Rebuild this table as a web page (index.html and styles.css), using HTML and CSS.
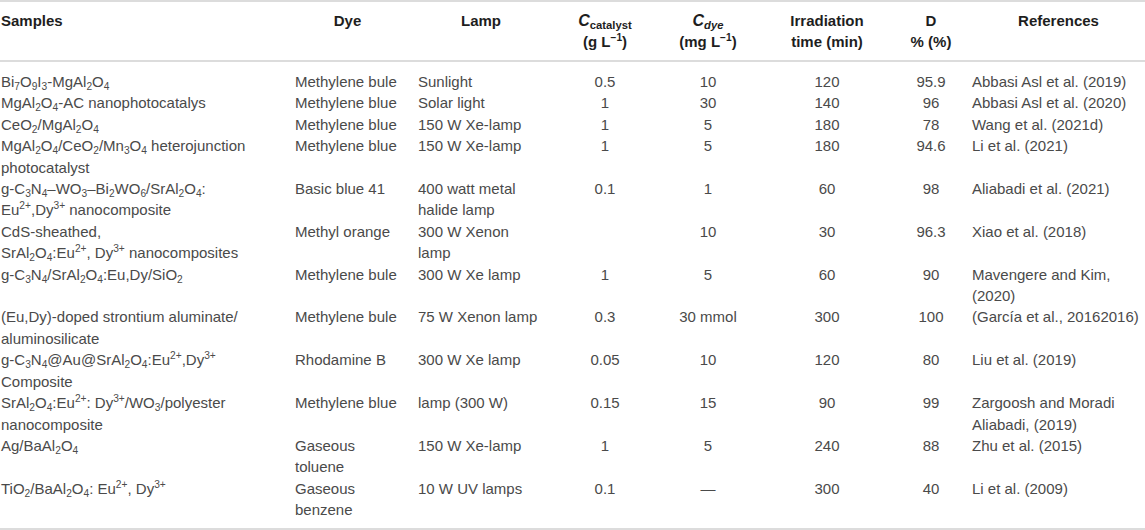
FILE: index.html
```html
<!DOCTYPE html>
<html lang="en">
<head>
  <meta charset="UTF-8" />
  <meta name="viewport" content="width=device-width, initial-scale=1.0"/>
  <link rel="stylesheet" href="styles.css">
</head>
<body>

  <!-- Photocatalysts table -->
  <table class="data-table">
    <colgroup>
      <col class="col-sample">
      <col class="col-dye">
      <col class="col-lamp">
      <col class="col-ccat">
      <col class="col-cdye">
      <col class="col-time">
      <col class="col-d">
      <col class="col-ref">
    </colgroup>
    <thead>
      <tr>
        <th class="left first">Samples</th>
        <th class="dye-head">Dye</th>
        <th>Lamp</th>
        <th><i class="big-c">C</i><sub>catalyst</sub><br>(g L<sup>−1</sup>)</th>
        <th><i class="big-c">C</i><sub><i>dye</i></sub><br>(mg L<sup>−1</sup>)</th>
        <th>Irradiation<br>time (min)</th>
        <th>D<br>% (%)</th>
        <th class="ref-head">References</th>
      </tr>
    </thead>
    <tbody>
      <tr>
        <td class="first">Bi<sub>7</sub>O<sub>9</sub>I<sub>3</sub>-MgAl<sub>2</sub>O<sub>4</sub></td>
        <td>Methylene bule</td>
        <td>Sunlight</td>
        <td class="num">0.5</td>
        <td class="num">10</td>
        <td class="num">120</td>
        <td class="num">95.9</td>
        <td class="ref">Abbasi Asl et al. (2019)</td>
      </tr>
      <tr>
        <td class="first">MgAl<sub>2</sub>O<sub>4</sub>-AC nanophotocatalys</td>
        <td>Methylene blue</td>
        <td>Solar light</td>
        <td class="num">1</td>
        <td class="num">30</td>
        <td class="num">140</td>
        <td class="num">96</td>
        <td class="ref">Abbasi Asl et al. (2020)</td>
      </tr>
      <tr>
        <td class="first">CeO<sub>2</sub>/MgAl<sub>2</sub>O<sub>4</sub></td>
        <td>Methylene blue</td>
        <td>150 W Xe-lamp</td>
        <td class="num">1</td>
        <td class="num">5</td>
        <td class="num">180</td>
        <td class="num">78</td>
        <td class="ref">Wang et al. (2021d)</td>
      </tr>
      <tr>
        <td class="first">MgAl<sub>2</sub>O<sub>4</sub>/CeO<sub>2</sub>/Mn<sub>3</sub>O<sub>4</sub> heterojunction<br>photocatalyst</td>
        <td>Methylene blue</td>
        <td>150 W Xe-lamp</td>
        <td class="num">1</td>
        <td class="num">5</td>
        <td class="num">180</td>
        <td class="num">94.6</td>
        <td class="ref">Li et al. (2021)</td>
      </tr>
      <tr>
        <td class="first">g-C<sub>3</sub>N<sub>4</sub>–WO<sub>3</sub>–Bi<sub>2</sub>WO<sub>6</sub>/SrAl<sub>2</sub>O<sub>4</sub>:<br>Eu<sup>2+</sup>,Dy<sup>3+</sup> nanocomposite</td>
        <td>Basic blue 41</td>
        <td>400 watt metal<br>halide lamp</td>
        <td class="num">0.1</td>
        <td class="num">1</td>
        <td class="num">60</td>
        <td class="num">98</td>
        <td class="ref">Aliabadi et al. (2021)</td>
      </tr>
      <tr>
        <td class="first">CdS-sheathed,<br>SrAl<sub>2</sub>O<sub>4</sub>:Eu<sup>2+</sup>, Dy<sup>3+</sup> nanocomposites</td>
        <td>Methyl orange</td>
        <td>300 W Xenon<br>lamp</td>
        <td class="num"></td>
        <td class="num">10</td>
        <td class="num">30</td>
        <td class="num">96.3</td>
        <td class="ref">Xiao et al. (2018)</td>
      </tr>
      <tr>
        <td class="first">g-C<sub>3</sub>N<sub>4</sub>/SrAl<sub>2</sub>O<sub>4</sub>:Eu,Dy/SiO<sub>2</sub></td>
        <td>Methylene bule</td>
        <td>300 W Xe lamp</td>
        <td class="num">1</td>
        <td class="num">5</td>
        <td class="num">60</td>
        <td class="num">90</td>
        <td class="ref">Mavengere and Kim,<br>(2020)</td>
      </tr>
      <tr>
        <td class="first">(Eu,Dy)-doped strontium aluminate/<br>aluminosilicate</td>
        <td>Methylene bule</td>
        <td>75 W Xenon lamp</td>
        <td class="num">0.3</td>
        <td class="num">30 mmol</td>
        <td class="num">300</td>
        <td class="num">100</td>
        <td class="ref">(García et al., 20162016)</td>
      </tr>
      <tr>
        <td class="first">g-C<sub>3</sub>N<sub>4</sub>@Au@SrAl<sub>2</sub>O<sub>4</sub>:Eu<sup>2+</sup>,Dy<sup>3+</sup><br>Composite</td>
        <td>Rhodamine B</td>
        <td>300 W Xe lamp</td>
        <td class="num">0.05</td>
        <td class="num">10</td>
        <td class="num">120</td>
        <td class="num">80</td>
        <td class="ref">Liu et al. (2019)</td>
      </tr>
      <tr>
        <td class="first">SrAl<sub>2</sub>O<sub>4</sub>:Eu<sup>2+</sup>: Dy<sup>3+</sup>/WO<sub>3</sub>/polyester<br>nanocomposite</td>
        <td>Methylene blue</td>
        <td>lamp (300 W)</td>
        <td class="num">0.15</td>
        <td class="num">15</td>
        <td class="num">90</td>
        <td class="num">99</td>
        <td class="ref">Zargoosh and Moradi<br>Aliabadi, (2019)</td>
      </tr>
      <tr>
        <td class="first">Ag/BaAl<sub>2</sub>O<sub>4</sub></td>
        <td>Gaseous<br>toluene</td>
        <td>150 W Xe-lamp</td>
        <td class="num">1</td>
        <td class="num">5</td>
        <td class="num">240</td>
        <td class="num">88</td>
        <td class="ref">Zhu et al. (2015)</td>
      </tr>
      <tr>
        <td class="first">TiO<sub>2</sub>/BaAl<sub>2</sub>O<sub>4</sub>: Eu<sup>2+</sup>, Dy<sup>3+</sup></td>
        <td>Gaseous<br>benzene</td>
        <td>10 W UV lamps</td>
        <td class="num">0.1</td>
        <td class="num">—</td>
        <td class="num">300</td>
        <td class="num">40</td>
        <td class="ref">Li et al. (2009)</td>
      </tr>
    </tbody>
  </table>

</body>
</html>
```

FILE: styles.css
```css
* {
  margin: 0;
  padding: 0;
  box-sizing: border-box;
}

html, body {
  background: #fff;
  font-family: 'Liberation Sans', Arial, sans-serif;
  color: #4a4a4a;
}

.data-table {
  width: 1145px;
  table-layout: fixed;
  border-collapse: separate;
  border-spacing: 0;
  font-size: 15px;
  line-height: 21.4px;
}

/* column widths */
.col-sample { width: 289px; }
.col-dye    { width: 123px; }
.col-lamp   { width: 138px; }
.col-ccat   { width: 110px; }
.col-cdye   { width: 96px; }
.col-time   { width: 142px; }
.col-d      { width: 66px; }
.col-ref    { width: 181px; }

th, td {
  padding: 0 6px;
  vertical-align: top;
  text-align: left;
  white-space: nowrap;
}

th {
  font-weight: bold;
  color: #1e1e1e;
  text-align: center;
  line-height: 21px;
  padding-top: 8px;
  padding-bottom: 8px;
  border-top: 2px solid #dcdcdc;
  border-bottom: 2px solid #dcdcdc;
}

th.left { text-align: left; }
th.dye-head { padding-right: 12px; }
th.ref-head { padding-left: 8px; padding-right: 0; }

th .big-c { font-size: 16px; }

.first { padding-left: 1px; }

td.num { text-align: center; }
td.ref { padding-left: 8px; padding-right: 0; }

tbody tr:first-child td { padding-top: 9px; }
tbody tr:last-child td {
  padding-bottom: 7px;
  border-bottom: 2px solid #dcdcdc;
}

/* chemical formulas */
sub, sup {
  font-size: 0.68em;
  line-height: 0;
}

sub { vertical-align: -0.3em; }
sup { vertical-align: 0.55em; }

th sub { font-size: 0.75em; }
```
